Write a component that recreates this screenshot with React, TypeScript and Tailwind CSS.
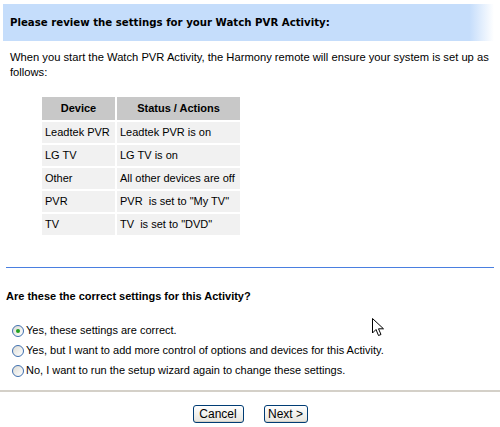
import React from "react";

const rows: [string, string][] = [
  ["Leadtek PVR", "Leadtek PVR is on"],
  ["LG TV", "LG TV is on"],
  ["Other", "All other devices are off"],
  ["PVR", 'PVR  is set to "My TV"'],
  ["TV", 'TV  is set to "DVD"'],
];

const options = [
  "Yes, these settings are correct.",
  "Yes, but I want to add more control of options and devices for this Activity.",
  "No, I want to run the setup wizard again to change these settings.",
];

function Radio({ checked }: { checked: boolean }) {
  return (
    <span className="w-[12px] h-[12px] rounded-full border border-[#3f6fae] bg-gradient-to-br from-[#dcdcd6] to-white flex items-center justify-center shrink-0">
      {checked && <span className="w-[4px] h-[4px] rounded-full bg-[#21a121]" />}
    </span>
  );
}

function XpButton({ width, children }: { width: string; children: React.ReactNode }) {
  return (
    <button
      className={`${width} h-[18px] rounded-[3px] border border-[#003c74] bg-gradient-to-b from-white to-[#e6e5de] text-[12px] leading-none text-black shadow-[inset_0_-1px_0_#d6d0c5]`}
    >
      {children}
    </button>
  );
}

export default function App() {
  return (
    <div className="relative w-[500px] h-[427px] overflow-hidden bg-white text-black font-['Liberation_Sans',Arial,sans-serif]">
      {/* Title band */}
      <div className="mt-[4px] ml-[3px] w-[491px] h-[37px] flex items-center pl-[7px] bg-[linear-gradient(to_right,#c5ddfb_95%,#ffffff)]">
        <h1 className="font-['DejaVu_Sans',Verdana,sans-serif] font-bold text-[10.2px]">
          Please review the settings for your Watch PVR Activity:
        </h1>
      </div>

      <p className="mt-[9px] px-[10px] text-[11.2px] leading-[15px]">
        When you start the Watch PVR Activity, the Harmony remote will ensure your system is set up as
        follows:
      </p>

      <table className="mt-[15px] ml-[40px] border-separate border-spacing-[2px] text-[11px]">
        <thead>
          <tr className="h-[23px]">
            <th className="w-[73px] bg-[#c8c8c8] font-bold text-center">Device</th>
            <th className="w-[123px] bg-[#c8c8c8] font-bold text-center">Status / Actions</th>
          </tr>
        </thead>
        <tbody>
          {rows.map(([device, status]) => (
            <tr key={device} className="h-[21px]">
              <td className="bg-[#f1f1f1] pl-[3px] whitespace-pre">{device}</td>
              <td className="bg-[#f1f1f1] pl-[3px] whitespace-pre">{status}</td>
            </tr>
          ))}
        </tbody>
      </table>

      <div className="mt-[30px] mx-[6px] h-[1px] bg-[#4a7fe0]" />

      <h2 className="mt-[20px] pl-[6px] font-bold text-[11px]">
        Are these the correct settings for this Activity?
      </h2>

      <div className="mt-[19px] pl-[12px] flex flex-col gap-[6px] text-[11px]">
        {options.map((label, i) => (
          <label key={label} className="flex items-center gap-[2px] h-[14px]">
            <Radio checked={i === 0} />
            {label}
          </label>
        ))}
      </div>

      <div className="mt-[12px] h-[2px] bg-[#d4d0c8]" />

      <div className="mt-[13px] flex justify-center gap-[20px]">
        <XpButton width="w-[51px]">Cancel</XpButton>
        <XpButton width="w-[44px]">Next &gt;</XpButton>
      </div>

      {/* mouse pointer */}
      <svg className="absolute left-[372px] top-[318px]" width="14" height="20" viewBox="0 0 14 20">
        <path
          d="M0.5 0.5 L0.5 15 L4 11.5 L6.5 17.5 L9 16.5 L6.5 10.8 L11.5 10.8 Z"
          fill="white"
          stroke="black"
          strokeWidth="1"
          strokeLinejoin="miter"
        />
      </svg>
    </div>
  );
}
